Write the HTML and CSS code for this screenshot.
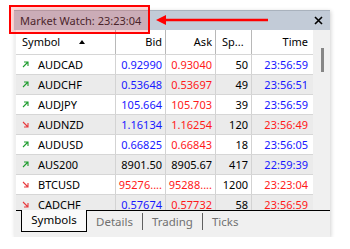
FILE: index.html
```html
<!DOCTYPE html>
<html lang="en">
<head>
	<meta charset="UTF-8">
	<title>Market Watch</title>
	<link rel="stylesheet" href="styles.css">
</head>
<body>
    <div class="window">
        <div class="titlebar">
            <span class="title">Market Watch: 23:23:04</span>
            <svg class="close" width="9" height="9" viewBox="0 0 9 9"><path d="M1 1 L8 8 M8 1 L1 8" stroke="#000" stroke-width="1.6"/></svg>
        </div>
        <div class="body">
            <div class="grid">
                <div class="row head">
                    <div class="cell sym">Symbol <svg class="sort" width="6" height="4" viewBox="0 0 6 4"><path d="M0 4 L3 0 L6 4 Z" fill="#000"/></svg></div>
                    <div class="cell num">Bid</div>
                    <div class="cell num">Ask</div>
                    <div class="cell spread-h">Sp...</div>
                    <div class="cell num last">Time</div>
                </div>
                <div class="row">
                    <div class="cell sym"><svg class="dir" width="7" height="7" viewBox="0 0 7 7"><path d="M1 6 L6 1 M2 1 H6 V5" stroke="#1c9c2c" stroke-width="1.1" fill="none"/></svg>AUDCAD</div>
                    <div class="cell num blue">0.92990</div>
                    <div class="cell num red">0.93040</div>
                    <div class="cell num">50</div>
                    <div class="cell num last blue">23:56:59</div>
                </div>
                <div class="row odd">
                    <div class="cell sym"><svg class="dir" width="7" height="7" viewBox="0 0 7 7"><path d="M1 6 L6 1 M2 1 H6 V5" stroke="#1c9c2c" stroke-width="1.1" fill="none"/></svg>AUDCHF</div>
                    <div class="cell num blue">0.53648</div>
                    <div class="cell num red">0.53697</div>
                    <div class="cell num">49</div>
                    <div class="cell num last blue">23:56:51</div>
                </div>
                <div class="row">
                    <div class="cell sym"><svg class="dir" width="7" height="7" viewBox="0 0 7 7"><path d="M1 6 L6 1 M2 1 H6 V5" stroke="#1c9c2c" stroke-width="1.1" fill="none"/></svg>AUDJPY</div>
                    <div class="cell num blue">105.664</div>
                    <div class="cell num red">105.703</div>
                    <div class="cell num">39</div>
                    <div class="cell num last blue">23:56:59</div>
                </div>
                <div class="row odd">
                    <div class="cell sym"><svg class="dir" width="7" height="7" viewBox="0 0 7 7"><path d="M1 1 L6 6 M6 2 V6 H2" stroke="#e8383c" stroke-width="1.1" fill="none"/></svg>AUDNZD</div>
                    <div class="cell num blue">1.16134</div>
                    <div class="cell num red">1.16254</div>
                    <div class="cell num">120</div>
                    <div class="cell num last red">23:56:49</div>
                </div>
                <div class="row">
                    <div class="cell sym"><svg class="dir" width="7" height="7" viewBox="0 0 7 7"><path d="M1 6 L6 1 M2 1 H6 V5" stroke="#1c9c2c" stroke-width="1.1" fill="none"/></svg>AUDUSD</div>
                    <div class="cell num blue">0.66825</div>
                    <div class="cell num red">0.66843</div>
                    <div class="cell num">18</div>
                    <div class="cell num last blue">23:56:05</div>
                </div>
                <div class="row odd">
                    <div class="cell sym"><svg class="dir" width="7" height="7" viewBox="0 0 7 7"><path d="M1 6 L6 1 M2 1 H6 V5" stroke="#1c9c2c" stroke-width="1.1" fill="none"/></svg>AUS200</div>
                    <div class="cell num">8901.50</div>
                    <div class="cell num">8905.67</div>
                    <div class="cell num">417</div>
                    <div class="cell num last blue">22:59:39</div>
                </div>
                <div class="row">
                    <div class="cell sym"><svg class="dir" width="7" height="7" viewBox="0 0 7 7"><path d="M1 1 L6 6 M6 2 V6 H2" stroke="#e8383c" stroke-width="1.1" fill="none"/></svg>BTCUSD</div>
                    <div class="cell num red">95276....</div>
                    <div class="cell num red">95288....</div>
                    <div class="cell num">1200</div>
                    <div class="cell num last red">23:23:04</div>
                </div>
                <div class="row odd">
                    <div class="cell sym"><svg class="dir" width="7" height="7" viewBox="0 0 7 7"><path d="M1 1 L6 6 M6 2 V6 H2" stroke="#e8383c" stroke-width="1.1" fill="none"/></svg>CADCHF</div>
                    <div class="cell num blue">0.57674</div>
                    <div class="cell num red">0.57732</div>
                    <div class="cell num">58</div>
                    <div class="cell num last red">23:56:59</div>
                </div>
            </div>
            <div class="scroll"><div class="thumb"></div></div>
        </div>
        <div class="tabs">
            <div class="tab-line lead"></div>
            <div class="tab active">Symbols</div>
            <div class="tab-line rest">
                <span class="tab">Details</span>
                <span class="sep"></span>
                <span class="tab">Trading</span>
                <span class="sep"></span>
                <span class="tab">Ticks</span>
            </div>
        </div>
    </div>
    <!-- annotation -->
    <div class="mark-box"></div>
    <svg class="mark-arrow" width="114" height="12" viewBox="0 0 114 12"><path d="M0 6 L10 1 L10 11 Z" fill="#f00"/><path d="M9 6 H112" stroke="#f00" stroke-width="2.4"/></svg>
</body>
</html>
```

FILE: styles.css
```css
* {
	padding: 0px;
	margin: 0px;
	box-sizing: border-box;
}
body {
	background: #fff;
	padding: 10px 0 0 14px;
	font-family: "Noto Sans", "Open Sans", sans-serif;
	font-size: 11px;
	color: #000;
}
.window {
	width: 316px;
	height: 227px;
	background: #f0f0f0;
	box-shadow: 1px 1px 4px rgba(0, 0, 0, 0.18);
	display: flex;
	flex-direction: column;
}
.titlebar {
	height: 20px;
	background: #c2cbd7;
	border-top: 1px solid #a9b2bd;
	display: flex;
	align-items: center;
	justify-content: space-between;
	padding: 0 7px 0 6px;
}
.title {
	color: #2b2b33;
	line-height: 18px;
}
.close {
	display: block;
}
.body {
	height: 180px;
	display: flex;
	padding-left: 2px;
	overflow: hidden;
}
.grid {
	width: 297px;
	background: #fff;
	overflow: hidden;
}
.row {
	display: grid;
	grid-template-columns: 100px 50px 50px 36px 61px;
	height: 20px;
	border-bottom: 1px solid #d6d6d6;
}
.row.odd {
	background: #ebebeb;
}
.row.head {
	height: 25px;
	background: #fff;
	border-bottom: 1px solid #d6d6d6;
}
.cell {
	border-right: 1px solid #d3d3d3;
	white-space: nowrap;
	line-height: 19px;
	overflow: hidden;
}
.head .cell {
	line-height: 24px;
	border-right-color: #b8b8b8;
}
.cell.last {
	border-right: none;
	padding-right: 5px;
}
.sym {
	padding-left: 6px;
	display: flex;
	align-items: center;
}
.head .sym {
	display: block;
}
.sort {
	margin-left: 16px;
	vertical-align: 2px;
}
.dir {
	display: block;
	margin-right: 9px;
}
.num {
	text-align: right;
	padding-right: 3px;
}
.spread-h {
	padding-left: 6px;
}
.blue {
	color: #1818ff;
}
.red {
	color: #ff1a1a;
}
.scroll {
	width: 17px;
	padding: 18px 0 0 8px;
}
.thumb {
	width: 3px;
	height: 24px;
	background: #868686;
}
.tabs {
	flex: 1;
	display: flex;
	padding-left: 2px;
}
.tab-line {
	border-top: 1px solid #000;
}
.lead {
	width: 5px;
}
.tab.active {
	width: 66px;
	height: 22px;
	border: 1px solid #000;
	border-top: none;
	background: #fafafa;
	text-align: center;
	line-height: 20px;
	font-size: 11.5px;
	color: #000;
}
.rest {
	flex: 1;
	display: flex;
	align-items: flex-start;
	padding: 2px 0 0 9px;
	gap: 9px;
	color: #707070;
	font-size: 11.5px;
}
.rest .tab {
	line-height: 17px;
}
.sep {
	width: 1px;
	height: 17px;
	background: #606060;
}
.mark-box {
	position: absolute;
	left: 9px;
	top: 5px;
	width: 141px;
	height: 29px;
	border: 2px solid #f00;
	background: rgba(255, 0, 0, 0.15);
}
.mark-arrow {
	position: absolute;
	left: 156px;
	top: 14px;
}
```
